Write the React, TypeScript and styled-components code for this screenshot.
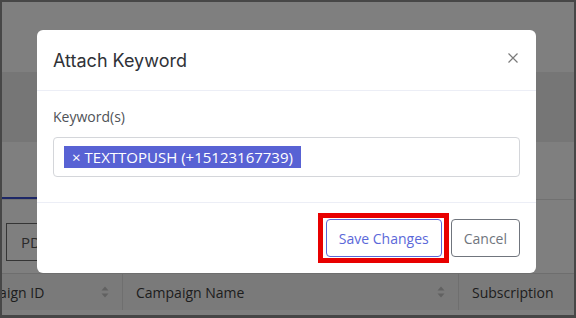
import React from "react"
import styled, { createGlobalStyle } from "styled-components"

const GlobalStyle = createGlobalStyle`
	html, body {
		margin: 0;
		padding: 0;
		background: #ffffff;
	}
	body {
		font-family: "Open Sans", "Noto Sans", sans-serif;
	}
	* {
		box-sizing: border-box;
	}
`

const Frame = styled.div`
	position: relative;
	width: 576px;
	height: 318px;
	overflow: hidden;
	border: 2px solid #474747;
	border-bottom-width: 3px;
	background: #ffffff;
`

/* ---------- page behind the dialog ---------- */

const Page = styled.div`
	display: flex;
	flex-direction: column;
`

const TopBar = styled.div`
	height: 70px;
	background: #ffffff;
`

const SubBar = styled.div`
	height: 70px;
	background: #ececec;
`

const Tabs = styled.div`
	display: flex;
	height: 58px;
	align-items: flex-end;
	border-bottom: 1px solid #e3e3e3;
`

const Tab = styled.div<{ $active?: boolean }>`
	width: 120px;
	height: 100%;
	border-bottom: 2px solid ${(p) => (p.$active ? "#3b4fcf" : "transparent")};
	margin-left: -60px;
`

const Toolbar = styled.div`
	display: flex;
	padding: 23px 0 12px 4px;
`

const ExportButton = styled.div`
	display: flex;
	align-items: center;
	height: 38px;
	padding: 0 14px;
	border: 1px solid #6a6a6a;
	font-size: 15px;
	color: #555;
`

const Table = styled.div`
	display: grid;
	grid-template-columns: 175px 336px 200px;
	margin-left: -54px;
	background: #f4f4f4;
	border-top: 1px solid #dcdcdc;
`

const HeadCell = styled.div<{ $last?: boolean }>`
	display: flex;
	align-items: center;
	justify-content: space-between;
	height: 36px;
	padding: 0 13px 0 13px;
	border-right: ${(p) => (p.$last ? "none" : "1px solid #dedede")};
	font-size: 14px;
	color: #3d3d3d;
`

const SortIcon = () => (
	<svg width="8" height="12" viewBox="0 0 8 12">
		<path d="M4 0.5 L7.5 4.5 L0.5 4.5 Z" fill="#c2c2c2" />
		<path d="M4 11.5 L7.5 7.5 L0.5 7.5 Z" fill="#c2c2c2" />
	</svg>
)

const Overlay = styled.div`
	position: absolute;
	inset: 0;
	background: rgba(0, 0, 0, 0.5);
`

/* ---------- dialog ---------- */

const Modal = styled.div`
	position: absolute;
	top: 28px;
	left: 35px;
	width: 499px;
	background: #ffffff;
	border-radius: 6px;
	display: flex;
	flex-direction: column;
`

const Header = styled.div`
	display: flex;
	align-items: center;
	justify-content: space-between;
	height: 61px;
	padding: 0 18px 0 16px;
	border-bottom: 1px solid #eceef6;
`

const Title = styled.h5`
	margin: 0;
	font-family: "Inter", "Open Sans", sans-serif;
	font-size: 18px;
	font-weight: 400;
	color: #2f3237;
`

const Close = styled.button`
	display: flex;
	padding: 0;
	border: none;
	background: none;
	margin-bottom: 5px;
`

const Body = styled.div`
	padding: 15px 16px 25px;
`

const Label = styled.div`
	font-size: 14px;
	line-height: 21px;
	color: #4f5257;
	margin-bottom: 10px;
`

const TagInput = styled.div`
	display: flex;
	align-items: center;
	height: 40px;
	padding: 0 10px;
	border: 1px solid #d4d6da;
	border-radius: 4px;
`

const Tag = styled.span`
	display: inline-flex;
	align-items: center;
	gap: 4px;
	height: 22px;
	padding: 0 8px;
	background: #5862d4;
	color: #ffffff;
	font-size: 15px;
`

const Footer = styled.div`
	display: flex;
	justify-content: flex-end;
	gap: 9px;
	padding: 16px 16px 16px;
	border-top: 1px solid #eceef6;
`

const Highlight = styled.span`
	position: relative;
	display: flex;

	&::after {
		content: "";
		position: absolute;
		top: -6px;
		bottom: -6px;
		left: -8px;
		right: -7px;
		border: 5px solid #e80000;
		pointer-events: none;
	}
`

const Button = styled.button<{ $tone: "primary" | "muted" }>`
	height: 38px;
	padding: 0 12px;
	background: #ffffff;
	border: 1px solid ${(p) => (p.$tone === "primary" ? "#5b68d9" : "#70757d")};
	border-radius: 4px;
	color: ${(p) => (p.$tone === "primary" ? "#5b68d9" : "#70757d")};
	font-family: "Open Sans", sans-serif;
	font-size: 14px;
`

export default function App() {
	return (
		<>
			<GlobalStyle />
			<Frame>
				<Page>
					<TopBar />
					<SubBar />
					<Tabs>
						<Tab $active />
					</Tabs>
					<Toolbar>
						<ExportButton>PDF</ExportButton>
					</Toolbar>
					<Table>
						<HeadCell>
							Campaign ID
							<SortIcon />
						</HeadCell>
						<HeadCell>
							Campaign Name
							<SortIcon />
						</HeadCell>
						<HeadCell $last>Subscription</HeadCell>
					</Table>
				</Page>
				<Overlay />
				<Modal>
					<Header>
						<Title>Attach Keyword</Title>
						<Close aria-label="Close">
							<svg width="10" height="10" viewBox="0 0 10 10">
								<path d="M0.5 0.5 L9.5 9.5 M9.5 0.5 L0.5 9.5" stroke="#7a7a7a" strokeWidth="1.2" />
							</svg>
						</Close>
					</Header>
					<Body>
						<Label>Keyword(s)</Label>
						<TagInput>
							<Tag>
								<span>×</span>
								TEXTTOPUSH (+15123167739)
							</Tag>
						</TagInput>
					</Body>
					<Footer>
						<Highlight>
							<Button $tone="primary">Save Changes</Button>
						</Highlight>
						<Button $tone="muted">Cancel</Button>
					</Footer>
				</Modal>
			</Frame>
		</>
	)
}
